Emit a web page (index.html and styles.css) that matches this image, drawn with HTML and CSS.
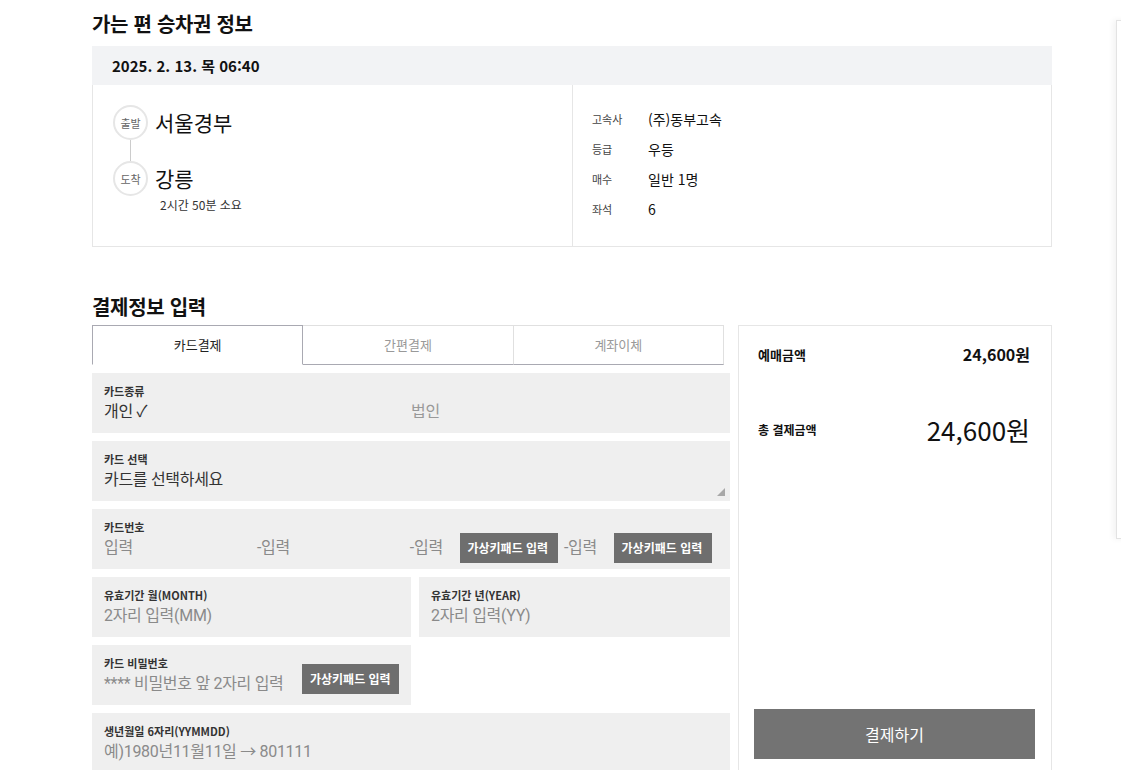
FILE: index.html
```html
<!DOCTYPE html>
<html lang="ko">
<head>
    <meta charset="utf-8">
    <title>승차권 결제</title>
    <link rel="stylesheet" href="styles.css">
</head>
<body>

    <div class="page">
        <h2 class="section-title">가는 편 승차권 정보</h2>

        <div class="ticket">
            <div class="ticket-date">2025. 2. 13. 목 06:40</div>
            <div class="ticket-body">
                <div class="route">
                    <div class="stop">
                        <span class="stop-badge">출발</span>
                        <span class="stop-name">서울경부</span>
                    </div>
                    <div class="stop-line"></div>
                    <div class="stop">
                        <span class="stop-badge">도착</span>
                        <span class="stop-name">강릉</span>
                    </div>
                    <div class="duration">2시간 50분 소요</div>
                </div>
                <div class="detail">
                    <div class="detail-row"><span class="detail-key">고속사</span><span>(주)동부고속</span></div>
                    <div class="detail-row"><span class="detail-key">등급</span><span>우등</span></div>
                    <div class="detail-row"><span class="detail-key">매수</span><span>일반 1명</span></div>
                    <div class="detail-row"><span class="detail-key">좌석</span><span>6</span></div>
                </div>
            </div>
        </div>

        <h2 class="section-title pay-title">결제정보 입력</h2>

        <div class="pay">
            <div class="pay-form">
                <div class="tabs">
                    <div class="tab active">카드결제</div>
                    <div class="tab">간편결제</div>
                    <div class="tab">계좌이체</div>
                </div>

                <div class="field">
                    <div class="field-label">카드종류</div>
                    <div class="field-value split">
                        <span class="on">개인 ✓</span>
                        <span class="off">법인</span>
                    </div>
                </div>

                <div class="field select">
                    <div class="field-label">카드 선택</div>
                    <div class="field-value on">카드를 선택하세요</div>
                    <span class="select-arrow"></span>
                </div>

                <div class="field">
                    <div class="field-label">카드번호</div>
                    <div class="field-value card-no">
                        <span class="seg seg-wide">입력</span>
                        <span class="seg seg-wide">-입력</span>
                        <span class="seg seg-short">-입력</span>
                        <span class="keypad">가상키패드 입력</span>
                        <span class="seg seg-short">-입력</span>
                        <span class="keypad">가상키패드 입력</span>
                    </div>
                </div>

                <div class="field-row">
                    <div class="field">
                        <div class="field-label">유효기간 월(MONTH)</div>
                        <div class="field-value">2자리 입력(MM)</div>
                    </div>
                    <div class="field">
                        <div class="field-label">유효기간 년(YEAR)</div>
                        <div class="field-value">2자리 입력(YY)</div>
                    </div>
                </div>

                <div class="field-row">
                    <div class="field pw">
                        <div class="pw-text">
                            <div class="field-label">카드 비밀번호</div>
                            <div class="field-value">**** 비밀번호 앞 2자리 입력</div>
                        </div>
                        <span class="keypad">가상키패드 입력</span>
                    </div>
                </div>

                <div class="field">
                    <div class="field-label">생년월일 6자리(YYMMDD)</div>
                    <div class="field-value">예)1980년11월11일 → 801111</div>
                </div>
            </div>

            <div class="summary">
                <div class="sum-row">
                    <span class="sum-key">예매금액</span>
                    <span class="sum-val">24,600원</span>
                </div>
                <div class="sum-row total">
                    <span class="sum-key">총 결제금액</span>
                    <span class="sum-val">24,600원</span>
                </div>
                <button class="pay-btn">결제하기</button>
            </div>
        </div>
    </div>

    <div class="side-panel"></div>

</body>
</html>
```

FILE: styles.css
```css
body {
    margin: 0;
    padding: 0;
    font-family: "Noto Sans CJK KR", "Noto Sans", sans-serif;
    color: #111;
    background: #fff;
    overflow: hidden;
}

.page {
    width: 960px;
    padding-left: 92px;
    padding-top: 9px;
}

.section-title {
    font-size: 20px;
    font-weight: 700;
    line-height: 30px;
    margin: 0 0 7px;
    letter-spacing: -0.3px;
}

.pay-title {
    margin-top: 45px;
    margin-bottom: 3px;
}

/* ticket */

.ticket-date {
    background: #f2f3f5;
    height: 39px;
    line-height: 39px;
    padding-left: 20px;
    font-size: 15px;
    font-weight: 700;
}

.ticket-body {
    display: flex;
    border: 1px solid #e6e6e6;
    border-top: none;
    height: 162px;
    box-sizing: border-box;
}

.route {
    width: 480px;
    border-right: 1px solid #e6e6e6;
    padding: 20px 0 0 20px;
    box-sizing: border-box;
}

.stop {
    display: flex;
    align-items: center;
    gap: 7px;
}

.stop-badge {
    width: 31px;
    height: 31px;
    border: 2px solid #e6e6e6;
    border-radius: 50%;
    font-size: 11px;
    color: #666;
    display: flex;
    align-items: center;
    justify-content: center;
}

.stop-name {
    font-size: 21px;
    line-height: 34px;
    position: relative;
    top: -1px;
}

.stop-line {
    width: 1px;
    height: 21px;
    background: #ccc;
    margin-left: 17px;
}

.duration {
    font-size: 12px;
    color: #333;
    margin: 0 0 0 47px;
    line-height: 18px;
}

.detail {
    padding: 19px 0 0 19px;
}

.detail-row {
    display: flex;
    align-items: center;
    height: 30px;
    font-size: 14px;
}

.detail-key {
    width: 56px;
    font-size: 11px;
    color: #444;
}

/* payment */

.pay {
    display: flex;
    gap: 8px;
    align-items: flex-start;
}

.pay-form {
    width: 638px;
    display: flex;
    flex-direction: column;
    gap: 8px;
}

.tabs {
    display: flex;
    width: 632px;
    height: 40px;
}

.tab {
    flex: 1;
    text-align: center;
    line-height: 38px;
    font-size: 13px;
    color: #999;
    border: 1px solid #e0e0e0;
    border-bottom: 1px solid #a9a9b2;
    border-left: none;
}

.tab.active {
    color: #222;
    border: 1px solid #a9a9b2;
    border-bottom: 1px solid transparent;
}

.field {
    background: #efefef;
    height: 60px;
    box-sizing: border-box;
    padding: 9px 12px 0;
    position: relative;
}

.field-label {
    font-size: 11px;
    font-weight: 700;
    color: #333;
    line-height: 18px;
}

.field-value {
    font-family: Roboto, "Noto Sans CJK KR", sans-serif;
    font-size: 16px;
    line-height: 24px;
    letter-spacing: -0.3px;
    color: #8a8a8a;
    display: flex;
    align-items: center;
    white-space: nowrap;
}

.field-value.on,
.on {
    color: #333;
}

.split span {
    width: 307px;
}

.off {
    color: #999;
}

.select-arrow {
    position: absolute;
    right: 5px;
    bottom: 5px;
    width: 0;
    height: 0;
    border-left: 8px solid transparent;
    border-bottom: 8px solid #a8a8a8;
}

.card-no {
    margin-top: -3px;
}

.card-no .seg-wide {
    width: 154px;
}

.card-no .seg-short {
    width: 50px;
}

.keypad {
    display: inline-block;
    background: #6e6e6e;
    color: #fff;
    font-family: "Noto Sans CJK KR", sans-serif;
    font-size: 12px;
    font-weight: 700;
    height: 30px;
    line-height: 30px;
    padding: 0 8px;
    letter-spacing: 0;
    white-space: nowrap;
}

.card-no .keypad {
    width: 83px;
    margin-right: 6px;
}

.field-row {
    display: flex;
    gap: 8px;
}

.field-row .field {
    width: 319px;
}

.field-row .field + .field {
    flex: 1;
}

.field.pw {
    display: flex;
    align-items: flex-start;
}

.pw-text {
    width: 186px;
    flex-shrink: 0;
}

.pw .keypad {
    width: 82px;
    margin: 10px 0 0 12px;
}

/* summary */

.summary {
    width: 314px;
    height: 450px;
    box-sizing: border-box;
    border: 1px solid #e6e6e6;
    padding: 16px 21px 15px 19px;
    display: flex;
    flex-direction: column;
}

.sum-row {
    display: flex;
    justify-content: space-between;
    align-items: center;
    height: 24px;
}

.sum-key {
    font-size: 13px;
    font-weight: 700;
}

.sum-row:first-child .sum-val {
    font-size: 16px;
    font-weight: 700;
}

.sum-row.total {
    margin-top: 43px;
    height: 40px;
}

.sum-row.total .sum-key {
    font-size: 12px;
}

.sum-row.total .sum-val {
    font-size: 26px;
    font-weight: 400;
}

.pay-btn {
    margin-top: auto;
    margin-left: -4px;
    margin-right: -5px;
    height: 50px;
    background: #737373;
    color: #fff;
    border: none;
    font-family: "Noto Sans CJK KR", sans-serif;
    font-size: 16px;
}

.side-panel {
    position: fixed;
    left: 1116px;
    top: 20px;
    width: 200px;
    height: 517px;
    border: 1px solid #e3e3e3;
    background: #fff;
    box-shadow: -3px 0 6px rgba(0, 0, 0, 0.05);
}
```
